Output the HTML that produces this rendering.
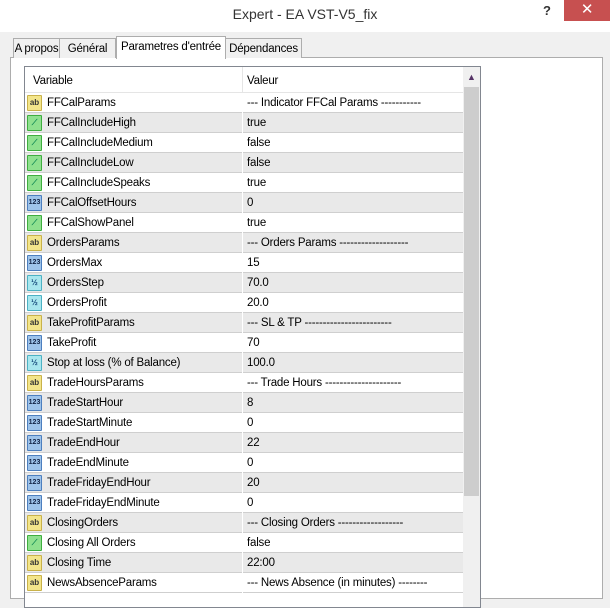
<!DOCTYPE html>
<html><head><style>
body{margin:0;width:610px;height:587px;overflow:hidden;background:#f0f0f0;font-family:"Liberation Sans",sans-serif;font-size:11.5px;letter-spacing:-0.2px;color:#000;position:relative}
.title{position:absolute;left:0;top:0;width:610px;height:32px;background:#fff}
.title .t{position:absolute;left:0;width:610px;top:6px;text-align:center;font-size:14px;letter-spacing:0;color:#333}
.q{position:absolute;left:543px;top:3px;font-size:13px;font-weight:bold;color:#333}
.x{position:absolute;left:564px;top:0;width:46px;height:21px;background:#c75050;color:#fff;text-align:center;font-size:15px;line-height:20px}
.tab{position:absolute;top:38px;height:19px;border:1px solid #adadad;border-bottom:none;background:#f0f0f0;line-height:20px;text-align:center;white-space:nowrap;font-size:11.5px}
.panel{position:absolute;left:10px;top:57px;width:591px;height:540px;border:1px solid #adadad;background:#fff}
.list{position:absolute;left:24px;top:66px;width:455px;height:540px;border:1px solid #828790;background:#fff;overflow:hidden}
.hdr{position:absolute;left:0;top:0;width:438px;height:25px;background:#fff;border-bottom:1px solid #e5e5e5}
.hdr span{position:absolute;top:8px}
.row{position:absolute;left:0;width:438px;height:19px;border-bottom:1px solid #cfcfcf}
.row.g{background:#e9e9e9}
.row .n{position:absolute;left:22px;top:4px;white-space:nowrap}
.row .v{position:absolute;left:222px;top:4px;white-space:nowrap}
.row .d{position:absolute;left:217px;top:0;width:1px;height:20px;background:#fff}
.ic{position:absolute;left:2px;top:2px;border-radius:1px;font-size:8px;line-height:14px;text-align:center;font-weight:bold;letter-spacing:0}
.ab{background:#f3e58a;border:1px solid #c9b24a;width:13px;height:14px;color:#333}
.bo{background:#8fe08f;border:1px solid #3fae3f;width:13px;height:14px;color:#185}
.in{background:#9ec3ea;border:1px solid #4c7fbf;width:13px;height:14px;color:#124;font-size:7px}
.fl{background:#a8e6ee;border:1px solid #4cb2c4;width:13px;height:14px;color:#147}
.sb{position:absolute;left:438px;top:0;width:17px;height:540px;background:#f0f0f0}
.thumb{position:absolute;left:1px;top:20px;width:15px;height:409px;background:#cdcdcd}
</style></head><body>
<div class="title"><div class="t">Expert - EA VST-V5_fix</div><div class="q">?</div><div class="x">✕</div></div>
<div class="panel"></div>
<div class="tab" style="left:13px;width:45px">A propos</div>
<div class="tab" style="left:59px;width:55px">Général</div>
<div class="tab" style="left:116px;top:36px;height:22px;background:#fff;width:108px;z-index:2">Parametres d'entrée</div>
<div class="tab" style="left:225px;width:75px">Dépendances</div>
<div class="list">
<div class="hdr"><span style="left:8px">Variable</span><span style="left:222px">Valeur</span><div style="position:absolute;left:217px;top:0;width:1px;height:25px;background:#e5e5e5"></div></div>
<div class="sb"><div style="position:absolute;left:4px;top:5px;font-size:9px;color:#553366">▲</div><div class="thumb"></div></div>
<div id="rows"></div>
</div>
<script>
var r=[["ab","FFCalParams","--- Indicator FFCal Params -----------"],["bo","FFCalIncludeHigh","true"],["bo","FFCalIncludeMedium","false"],["bo","FFCalIncludeLow","false"],["bo","FFCalIncludeSpeaks","true"],["in","FFCalOffsetHours","0"],["bo","FFCalShowPanel","true"],["ab","OrdersParams","--- Orders Params -------------------"],["in","OrdersMax","15"],["fl","OrdersStep","70.0"],["fl","OrdersProfit","20.0"],["ab","TakeProfitParams","--- SL &amp; TP ------------------------"],["in","TakeProfit","70"],["fl","Stop at loss (% of Balance)","100.0"],["ab","TradeHoursParams","--- Trade Hours ---------------------"],["in","TradeStartHour","8"],["in","TradeStartMinute","0"],["in","TradeEndHour","22"],["in","TradeEndMinute","0"],["in","TradeFridayEndHour","20"],["in","TradeFridayEndMinute","0"],["ab","ClosingOrders","--- Closing Orders ------------------"],["bo","Closing All Orders","false"],["ab","Closing Time","22:00"],["ab","NewsAbsenceParams","--- News Absence (in minutes) --------"]];
var lab={ab:"ab",bo:"⟋",in:"123",fl:"½"};
var h="";r.forEach(function(x,i){h+='<div class="row'+(i%2?' g':'')+'" style="top:'+(26+20*i)+'px"><div class="ic '+x[0]+'">'+lab[x[0]]+'</div><span class="n">'+x[1]+'</span><div class="d"></div><span class="v">'+x[2]+'</span></div>';});
document.getElementById("rows").innerHTML=h;
</script>
</body></html>
